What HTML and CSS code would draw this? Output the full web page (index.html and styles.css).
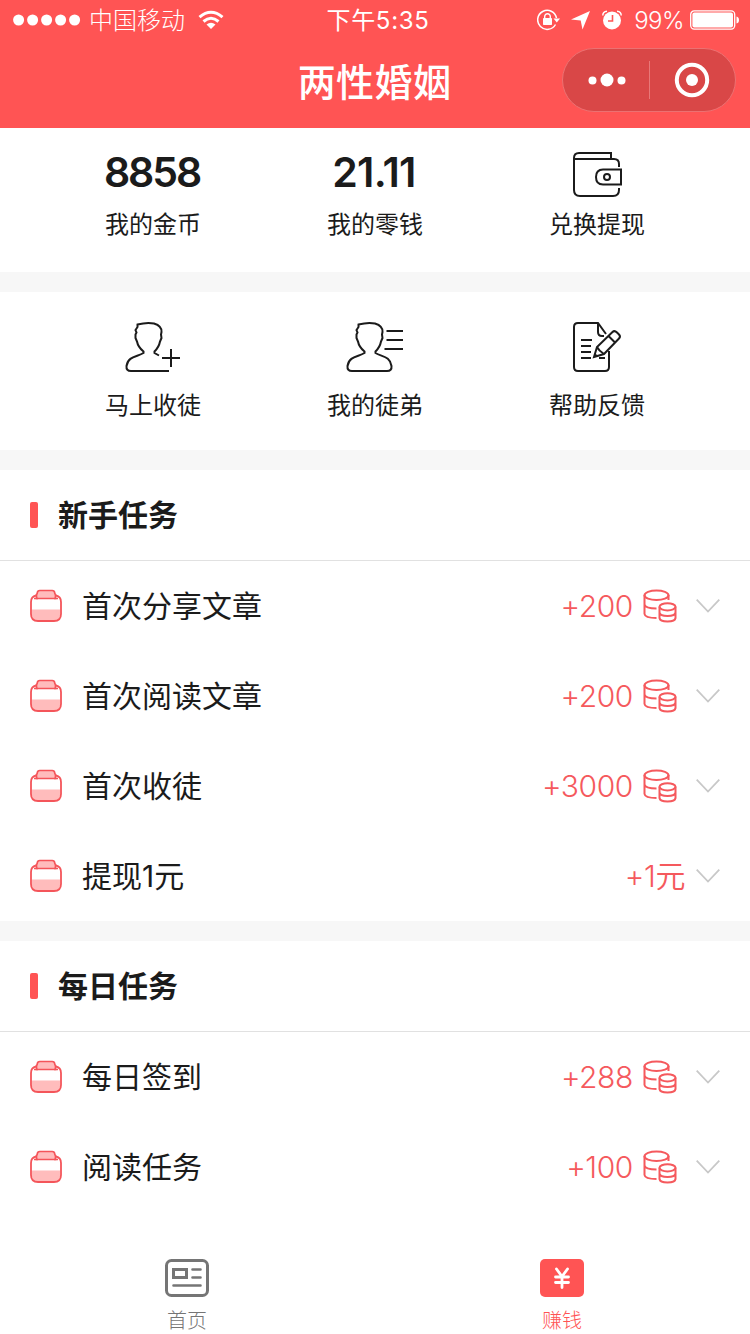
FILE: index.html
```html
<!DOCTYPE html>
<html lang="zh-CN">
<head>
<meta charset="utf-8">
<title>两性婚姻</title>
<link rel="stylesheet" href="styles.css">
</head>
<body>
<svg class="sprite" width="0" height="0" aria-hidden="true">
  <symbol id="jar" viewBox="0 0 32 34">
    <path d="M2 20.500H30V26q0 6-6 6H8q-6 0-6-6Z" fill="#ffbcbc"/>
    <path d="M6 6.500Q1 7.500 1 13V25Q1 32 8 32H24Q31 32 31 25V13Q31 7.500 26 6.500" fill="none" stroke="#f4555a" stroke-width="1.800"/>
    <path d="M6.500 9.500V5.500Q7.300 5 7.300 3.800 7.500 1.500 9.800 1.500H22.200Q24.500 1.500 24.700 3.800 24.700 5 25.500 5.500V9.500Z" fill="#ffbcbc" stroke="#f4555a" stroke-width="1.700"/>
    <path d="M4 9.500H8M24 9.500H28" stroke="#f4555a" stroke-width="1.500"/>
  </symbol>
  <symbol id="coins" viewBox="0 0 34 34">
    <g fill="none" stroke="#f5595d" stroke-width="2">
      <ellipse cx="13.500" cy="6.300" rx="12" ry="4.800"/>
      <path d="M1.500 6V25Q2 29 13.500 29M25.500 6V11M1.500 15.500Q2.500 19.500 13.500 19.500"/>
      <ellipse cx="24.500" cy="17.800" rx="8" ry="3.600"/>
      <path d="M16.500 17.800V29Q17 32.500 24.500 32.500T32.500 29V17.800M16.500 23.500Q17 27 24.500 27T32.500 23.500"/>
    </g>
  </symbol>
  <symbol id="chevron" viewBox="0 0 24 14">
    <path d="M.7.700 12 12.500 23.300.700" fill="none" stroke="#c8c8c8" stroke-width="1.800"/>
  </symbol>
</svg>

<div class="page">
  <header class="top">
    <div class="status">
      <div class="status-left">
        <svg width="68" height="12" viewBox="0 0 68 12" fill="#fff"><circle cx="5.600" cy="6" r="5.500"/><circle cx="19.600" cy="6" r="5.500"/><circle cx="33.600" cy="6" r="5.500"/><circle cx="47.600" cy="6" r="5.500"/><circle cx="61.600" cy="6" r="5.500"/></svg>
        <span class="carrier">中国移动</span>
        <svg class="wifi" width="26" height="20" viewBox="0 0 26 20"><g fill="none" stroke="#fff" stroke-width="3"><path d="M1.500 7.200Q13-2.600 24.500 7.200"/><path d="M5.500 11.500Q13 5 20.500 11.500"/></g><path d="M8.500 14.500Q13 11 17.500 14.500L13 19Z" fill="#fff"/></svg>
      </div>
      <div class="clock">下午5:35</div>
      <div class="status-right">
        <svg width="23" height="22" viewBox="0 0 23 22"><path d="M18.500 15.500A9.500 9.500 0 1 1 19.500 9" fill="none" stroke="#fff" stroke-width="1.500"/><path d="M16.500 9.500H23L19.800 13.500Z" fill="#fff"/><rect x="6" y="9" width="9" height="7" rx=".8" fill="#fff"/><path d="M7.700 9.500V7.500a2.800 2.800 0 0 1 5.600 0V9.500" fill="none" stroke="#fff" stroke-width="1.400"/></svg>
        <svg class="arrow" width="19" height="19" viewBox="0 0 19 19"><path d="M19 0 11.500 18.500 9.700 9.500 0 8.500Z" fill="#fff"/></svg>
        <svg class="alarm" width="20" height="20" viewBox="0 0 20 20"><circle cx="10" cy="10.500" r="9" fill="#fff"/><path d="M.8 5.500Q.8 1.500 5 1.200M19.200 5.500Q19.200 1.500 15 1.200" fill="none" stroke="#fff" stroke-width="1.500"/><path d="M10.500 5V11H6" fill="none" stroke="#ff5454" stroke-width="1.600"/></svg>
        <span class="percent">99%</span>
        <svg class="battery" width="50" height="20" viewBox="0 0 50 20"><rect x=".7" y=".9" width="44" height="18.200" rx="3.500" fill="none" stroke="#fff" stroke-width="1.300"/><rect x="2.400" y="2.600" width="40.600" height="14.800" rx="2" fill="#fff"/><path d="M46.500 6.500Q49 7 49 10T46.500 13.500Z" fill="#fff"/></svg>
      </div>
    </div>
    <div class="nav">
      <h1 class="title">两性婚姻</h1>
      <div class="capsule">
        <svg class="dots" width="38" height="14" viewBox="0 0 38 14" fill="#fff"><circle cx="4.500" cy="7.500" r="4"/><circle cx="19" cy="7" r="6.500"/><circle cx="33.500" cy="7.500" r="4"/></svg>
        <i class="capsule-line"></i>
        <svg width="36" height="36" viewBox="0 0 36 36"><circle cx="18" cy="18" r="15.200" fill="none" stroke="#fff" stroke-width="4"/><circle cx="18" cy="18" r="6" fill="#fff"/></svg>
      </div>
    </div>
  </header>

  <section class="grid stats">
    <div class="cell"><div class="figure">8858</div><div class="label">我的金币</div></div>
    <div class="cell"><div class="figure decimal">21.11</div><div class="label">我的零钱</div></div>
    <div class="cell">
      <div class="figure"><svg class="wallet" width="50" height="46" viewBox="0 0 50 46"><g fill="none" stroke="#1b1b1b" stroke-width="2"><path d="M38 7V1H6Q1 1 1 6V38Q1 44 7 44H40Q46 44 46 38V36M1 7H41Q46 7 46 12V15"/><path d="M48 17.500H30Q23 17.500 23 25T30 32.500H48Z"/><circle cx="34" cy="25" r="3"/></g></svg></div>
      <div class="label">兑换提现</div>
    </div>
  </section>

  <section class="grid actions">
    <div class="cell">
      <svg width="58" height="54" viewBox="0 0 58 54"><g fill="none" stroke="#1b1b1b" stroke-width="2"><path d="M45 51H7Q2 51 2.500 46C4 36 13 37 19.500 33V31.500Q14 27 13 21.500L11.500 18V14.500L12.500 12.500 11.500 10 13.500 7V4.500Q23 2 30 3.500 38 6 37.500 12L37 14.500 37.500 18 36 21.500Q35 27 30.500 31.500V33L35 35.500"/><path d="M38 38H56M47 29V47"/></g></svg>
      <div class="label">马上收徒</div>
    </div>
    <div class="cell">
      <svg width="58" height="54" viewBox="0 0 58 54"><g fill="none" stroke="#1b1b1b" stroke-width="2"><path d="M6 51Q1 51 1.500 46C3 36 12 37 18.500 33V31.500Q13 27 12 21.500L10.500 18V14.500L11.500 12.500 10.500 10 12.500 7V4.500Q22 2 29 3.500 37 6 36.500 12L36 14.500 36.500 18 35 21.500Q34 27 29.500 31.500V33C36 37 44 36 45.500 46Q46 51 41 51Z"/><path d="M40.500 11H57M40.500 20H57M38.500 29H57"/></g></svg>
      <div class="label">我的徒弟</div>
    </div>
    <div class="cell">
      <svg width="58" height="54" viewBox="0 0 58 54"><g fill="none" stroke="#1b1b1b" stroke-width="2"><path d="M41 31V47Q41 51 37 51H10Q6 51 6 47V7Q6 3 10 3H30L38 14M30 3V12Q30 16 34 16H36M13 20H24M13 26H23M13 32H23M13 38H23M31 38H37"/><path d="M26 37 29 27 44.500 12Q46.500 10 49 12.500L51 14.500Q53 16.500 51 18.500L36 34ZM29 27Q31 31 36 34M40.500 16 47 22.500M27 35 29 36"/></g></svg>
      <div class="label">帮助反馈</div>
    </div>
  </section>

  <section class="tasks">
    <h2 class="heading"><span>新手任务</span></h2>
    <div class="row"><svg class="jar"><use href="#jar"/></svg><span class="name">首次分享文章</span><span class="reward">+200</span><svg class="coins"><use href="#coins"/></svg><svg class="chevron"><use href="#chevron"/></svg></div>
    <div class="row"><svg class="jar"><use href="#jar"/></svg><span class="name">首次阅读文章</span><span class="reward">+200</span><svg class="coins"><use href="#coins"/></svg><svg class="chevron"><use href="#chevron"/></svg></div>
    <div class="row"><svg class="jar"><use href="#jar"/></svg><span class="name">首次收徒</span><span class="reward">+3000</span><svg class="coins"><use href="#coins"/></svg><svg class="chevron"><use href="#chevron"/></svg></div>
    <div class="row"><svg class="jar"><use href="#jar"/></svg><span class="name">提现1元</span><span class="reward cash">+1元</span><svg class="chevron"><use href="#chevron"/></svg></div>
  </section>

  <section class="tasks daily">
    <h2 class="heading"><span>每日任务</span></h2>
    <div class="row"><svg class="jar"><use href="#jar"/></svg><span class="name">每日签到</span><span class="reward">+288</span><svg class="coins"><use href="#coins"/></svg><svg class="chevron"><use href="#chevron"/></svg></div>
    <div class="row"><svg class="jar"><use href="#jar"/></svg><span class="name">阅读任务</span><span class="reward">+100</span><svg class="coins"><use href="#coins"/></svg><svg class="chevron"><use href="#chevron"/></svg></div>
  </section>

  <nav class="tabs">
    <div class="tab">
      <svg width="44" height="38" viewBox="0 0 44 38"><g fill="none" stroke="#757575" stroke-width="3"><rect x="1.500" y="1.500" width="41" height="35" rx="5"/><rect x="8.500" y="10.500" width="13" height="8"/><path d="M27.500 10.500H35.500M27.500 18.500H35.500M8.500 26.500H35.500" stroke-linecap="round" stroke-width="2.600"/></g></svg>
      <span>首页</span>
    </div>
    <div class="tab active">
      <svg width="44" height="38" viewBox="0 0 44 38"><rect width="44" height="38" rx="5" fill="#ff5454"/><path d="M16.500 10 22 17.500 27.500 10M22 17.500V28.500M15.500 18H28.500M15.500 23.500H28.500" fill="none" stroke="#fff" stroke-width="2.800" stroke-linecap="round"/></svg>
      <span>赚钱</span>
    </div>
  </nav>
</div>
</body>
</html>
```

FILE: styles.css
```css
* { box-sizing: border-box; }
body {
  margin: 0;
  background: #fff;
  color: #1b1b1b;
  font-family: Inter, "Noto Sans CJK SC", sans-serif;
}
svg { display: block; flex: none; }
.sprite { position: absolute; }
.page { width: 750px; height: 1334px; display: flex; flex-direction: column; overflow: hidden; }
.page > * { flex-shrink: 0; }

.top { height: 128px; background: #ff5454; color: #fff; }
.status {
  height: 40px;
  display: grid;
  grid-template-columns: 1fr auto 1fr;
  align-items: center;
  padding: 0 10px 0 13px;
  font-size: 24px;
  line-height: 38px;
}
.status-left, .status-right { display: flex; align-items: center; height: 40px; }
.status-right { justify-content: flex-end; }
.carrier, .clock, .percent { padding-top: 2px; }
.carrier { margin-left: 8px; font-weight: 300; }
.wifi { margin-left: 13px; }
.clock { letter-spacing: .7px; padding-left: 3px; }
.arrow { margin-left: 11px; }
.alarm { margin-left: 12px; }
.percent { margin-left: 12px; font-weight: 300; letter-spacing: -.5px; }
.battery { margin-left: 6px; }
.nav {
  height: 88px;
  display: grid;
  grid-template-columns: 1fr auto 1fr;
  align-items: center;
  padding: 0 14px 8px;
}
.title { grid-column: 2; margin: 0 1px 0 0; padding-top: 3px; font-size: 38px; line-height: 60px; font-weight: 500; letter-spacing: .4px; }
.capsule {
  justify-self: end;
  width: 174px;
  height: 64px;
  display: grid;
  grid-template-columns: 1fr 1px 1fr;
  align-items: center;
  justify-items: center;
  border: 1px solid #ec7172;
  border-radius: 32px;
  background: #d94747;
}
.dots { margin-left: 3px; }
.capsule-line { width: 1px; height: 38px; background: #e87878; }

.grid { display: grid; grid-template-columns: repeat(3, 222px); padding: 0 42px; }
.cell { display: flex; flex-direction: column; align-items: center; }
.stats { height: 164px; border-bottom: 20px solid #f7f7f7; padding-top: 20px; }
.figure { height: 52px; line-height: 48px; font-size: 41px; font-weight: 600; letter-spacing: -2.1px; margin-right: 2px; }
.decimal { letter-spacing: -.7px; }
.wallet { margin: 4px 0 0 4px; }
.label { font-size: 24px; line-height: 36px; margin-top: 7px; }
.actions { height: 178px; border-bottom: 20px solid #f7f7f7; padding-top: 28px; }
.actions .label { margin-top: 14px; }

.heading {
  height: 91px;
  margin: 0;
  padding: 0 30px;
  display: flex;
  align-items: center;
  gap: 20px;
  border-bottom: 1px solid #e1e1e1;
  font-size: 30px;
  font-weight: 700;
}
.heading span { padding-bottom: 4px; }
.heading::before { content: ""; width: 8px; height: 26px; border-radius: 2px; background: #ff5454; }
.row { height: 90px; display: flex; align-items: center; padding: 0 30px; font-size: 30px; line-height: 44px; }
.jar { width: 32px; height: 34px; }
.name { flex: 1; margin-left: 20px; }
.reward { color: #f5595d; font-weight: 350; letter-spacing: -.4px; }
.cash { margin-right: 11px; }
.coins { width: 34px; height: 34px; margin: 0 19px 0 10px; }
.chevron { width: 24px; height: 14px; }
.daily { border-top: 20px solid #f7f7f7; }

.tabs { display: grid; grid-template-columns: 1fr 1fr; margin-top: 47px; }
.tab { display: flex; flex-direction: column; align-items: center; color: #757575; font-size: 20px; line-height: 26px; font-weight: 300; gap: 11px; padding-right: 1px; }
.active { color: #ff5454; }
```
